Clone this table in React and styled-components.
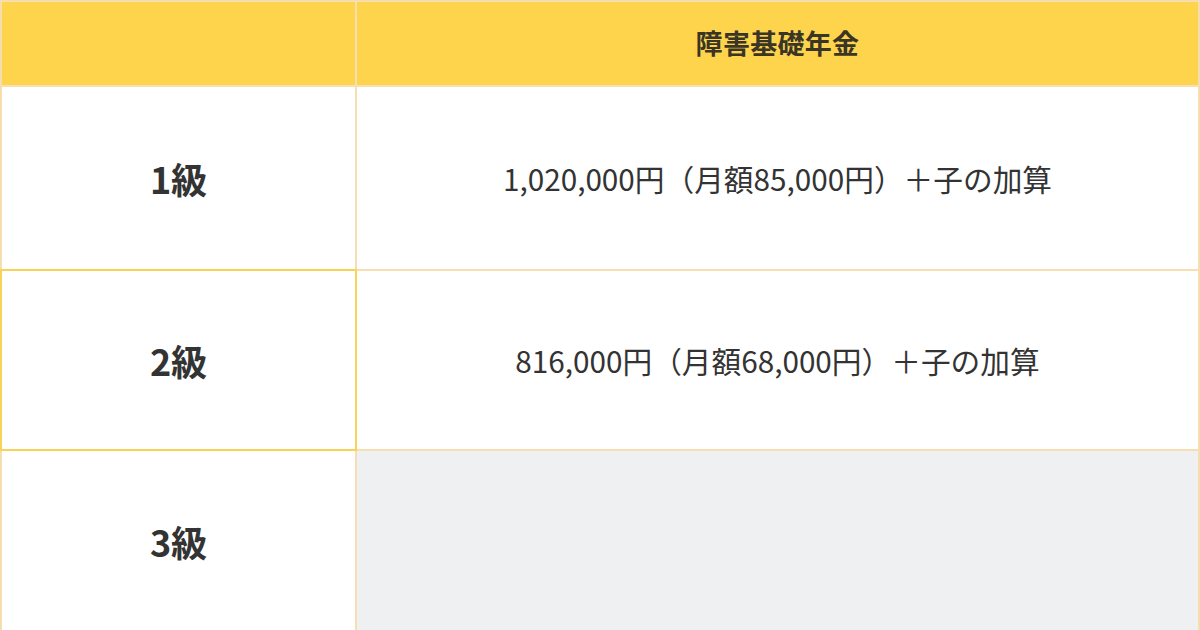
import styled, {createGlobalStyle} from "styled-components";

const GlobalStyle = createGlobalStyle`
  html, body {
    margin: 0;
    padding: 0;
    background: #ffffff;
  }
  body {
    font-family: "Noto Sans CJK JP", "Noto Sans", sans-serif;
    color: #333333;
  }
`;

const Table = styled.div`
  width: 1200px;
  height: 630px;
  box-sizing: border-box;
  display: grid;
  grid-template-columns: 355px 1fr;
  grid-template-rows: 85px 184px 180px 181px;
  border: 1px solid #f6dcaa;
  background: #ffffff;
`;

const Cell = styled.div`
  display: flex;
  align-items: center;
  justify-content: center;
  box-sizing: border-box;
  border: 1px solid ${p => (p.$highlight ? "#f7d458" : "#f6dfb0")};
  background: ${p => (p.$head ? "#fdd44c" : p.$empty ? "#eff0f2" : "#ffffff")};
  position: relative;
  z-index: ${p => (p.$highlight ? 1 : 0)};
  box-shadow: ${p => (p.$highlight ? "0 0 0 1px #f7d458" : "none")};
`;

const HeadText = styled.span`
  font-size: 27px;
  font-weight: 700;
  color: #3a3524;
  letter-spacing: 0.3px;
  margin-top: -3px;
`;

const GradeText = styled.span`
  font-size: 36px;
  font-weight: 700;
  color: #333333;
`;

const AmountText = styled.span`
  font-size: 29.7px;
  font-weight: 400;
  color: #333333;
`;

const rows = [
  {grade: "1級", amount: "1,020,000円（月額85,000円）＋子の加算"},
  {grade: "2級", amount: "816,000円（月額68,000円）＋子の加算", highlight: true},
  {grade: "3級", amount: null},
];

export default function App() {
  return (
    <>
      <GlobalStyle/>
      <Table>
        <Cell $head/>
        <Cell $head>
          <HeadText>障害基礎年金</HeadText>
        </Cell>
        {rows.map(row => (
          <Row key={row.grade} row={row}/>
        ))}
      </Table>
    </>
  );
}

const Row = ({row}) => (
  <>
    <Cell $highlight={row.highlight}>
      <GradeText>{row.grade}</GradeText>
    </Cell>
    <Cell $empty={!row.amount}>
      {row.amount && <AmountText>{row.amount}</AmountText>}
    </Cell>
  </>
);
